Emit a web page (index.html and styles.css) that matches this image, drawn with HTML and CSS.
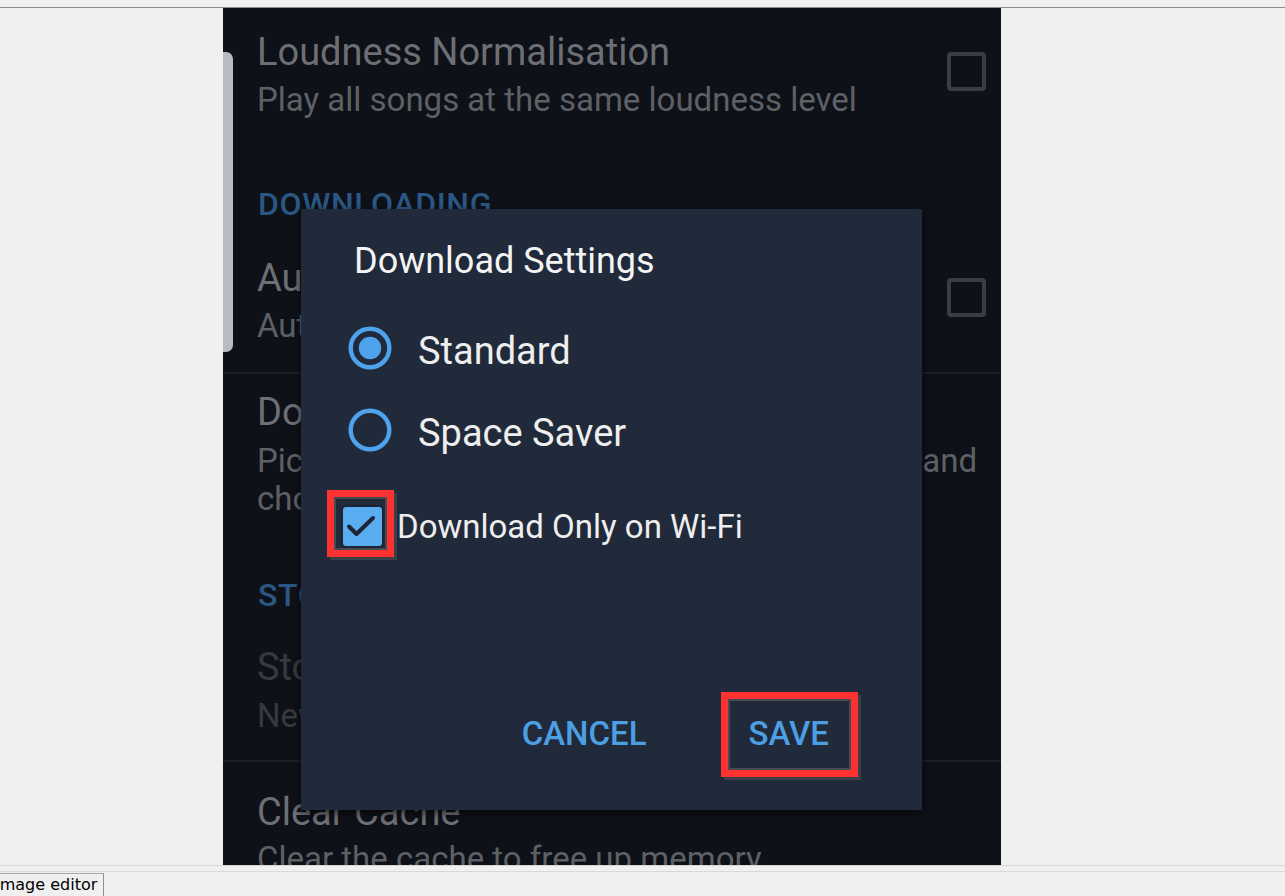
FILE: index.html
```html
<!DOCTYPE html>
<html lang="en">
<head>
<meta charset="utf-8">
<title>Download Settings</title>
<link rel="stylesheet" href="styles.css">
</head>
<body>
<div class="chrome-top"></div>
<div class="stage">
  <div class="phone">
    <div class="list">
      <div class="item item-loud">
        <div class="texts">
          <div class="title">Loudness Normalisation</div>
          <div class="sub">Play all songs at the same loudness level</div>
        </div>
        <span class="box"></span>
      </div>
      <div class="header header-dl">DOWNLOADING</div>
      <div class="item item-auto">
        <div class="texts">
          <div class="title">Auto Download</div>
          <div class="sub">Automatically download new songs</div>
        </div>
        <span class="box"></span>
      </div>
      <div class="divider divider-a"></div>
      <div class="item item-quality">
        <div class="texts">
          <div class="title">Download Settings</div>
          <div class="sub sub-wide">Pick the audio quality for your downloads, and choose whether to download on Wi-Fi only</div>
        </div>
      </div>
      <div class="header header-st">STORAGE</div>
      <div class="item item-storage">
        <div class="texts">
          <div class="title">Storage Location</div>
          <div class="sub">Never store music on SD card</div>
        </div>
      </div>
      <div class="divider divider-b"></div>
      <div class="item item-cache">
        <div class="texts">
          <div class="title">Clear Cache</div>
          <div class="sub">Clear the cache to free up memory</div>
        </div>
      </div>
    </div>

    <div class="scroll-thumb"></div>

    <div class="dialog">
      <div class="dialog-title">Download Settings</div>
      <div class="radio-row">
        <svg class="radio" width="44" height="44" viewBox="0 0 44 44"><circle cx="22" cy="22" r="19.3" fill="none" stroke="#4ea3ec" stroke-width="4.4"/><circle cx="22" cy="22" r="11.2" fill="#4ea3ec"/></svg>
        <span class="radio-label">Standard</span>
      </div>
      <div class="radio-row">
        <svg class="radio" width="44" height="44" viewBox="0 0 44 44"><circle cx="22" cy="22" r="19.3" fill="none" stroke="#4ea3ec" stroke-width="4.4"/></svg>
        <span class="radio-label">Space Saver</span>
      </div>
      <div class="check-row">
        <svg class="check" width="43" height="43" viewBox="0 0 43 43"><rect x="1" y="1" width="41" height="41" rx="4" fill="#58acef" stroke="#1c2536" stroke-width="2"/><path d="M8 21.5 L15.5 29 L32 13" fill="none" stroke="#1b2436" stroke-width="4" stroke-linecap="round" stroke-linejoin="round"/></svg>
        <span class="check-label">Download Only on Wi-Fi</span>
      </div>
      <div class="actions">
        <span class="btn">CANCEL</span>
        <span class="btn">SAVE</span>
      </div>
      <div class="mark mark-check"></div>
      <div class="mark mark-save"></div>
    </div>
  </div>
</div>
<div class="chrome-bottom">
  <div class="tab"><span class="tab-text">Image editor</span></div>
</div>
</body>
</html>
```

FILE: styles.css
```css
html, body {
  margin: 0;
  padding: 0;
  background: #f0f0f0;
  width: 1285px;
  height: 896px;
  overflow: hidden;
}

.chrome-top {
  height: 7px;
  background: #f0f0f0;
  border-bottom: 1px solid #8c8c8c;
}

.stage {
  height: 857px;
  padding-left: 223px;
  background: #f0f0f0;
  display: flex;
}

.phone {
  position: relative;
  width: 778px;
  height: 857px;
  background: #0e1118;
  overflow: hidden;
  font-family: Roboto, "Noto Sans", sans-serif;
}

.list {
  display: flex;
  flex-direction: column;
}

.item {
  display: flex;
  align-items: center;
  padding: 0 15px 0 34px;
}

.texts {
  flex: 1;
  min-width: 0;
}

.title {
  font-size: 38px;
  line-height: 44px;
  color: #6c6f74;
  white-space: nowrap;
}

.sub {
  font-size: 33px;
  line-height: 38px;
  color: #5d6065;
  margin-top: 7px;
  white-space: nowrap;
}

.sub-wide {
  white-space: normal;
  width: 720px;
  text-align: justify;
  margin-top: 8px;
}

.box {
  width: 31px;
  height: 31px;
  border: 4px solid #3a3d43;
  border-radius: 4px;
  margin-bottom: 7px;
  flex: none;
}

.item-loud { padding-top: 22px; }
.item-auto { padding-top: 33px; }
.item-quality { padding-top: 16px; }
.item-storage { padding-top: 31px; }
.item-storage .title,
.item-storage .sub { color: #36393e; }
.item-storage .sub { margin-top: 8px; }
.item-cache { padding-top: 28px; }
.item-cache .sub { margin-top: 6px; }

.header {
  font-size: 32px;
  line-height: 38px;
  font-weight: 500;
  color: #2a5784;
  padding-left: 35px;
  letter-spacing: 0.6px;
}
.header-dl { margin-top: 66px; }
.header-st { margin-top: 58px; }

.divider {
  height: 2px;
  background: #1c1f26;
}
.divider-a { margin-top: 27px; }
.divider-b { margin-top: 25px; }

.scroll-thumb {
  position: absolute;
  left: 0;
  top: 44px;
  width: 10px;
  height: 300px;
  background: #b9bcc0;
  border-radius: 0 7px 7px 0;
}

.dialog {
  position: absolute;
  left: 78px;
  top: 201px;
  width: 621px;
  height: 601px;
  background: #212a3a;
  box-shadow: 0 3px 8px rgba(0, 0, 0, 0.6);
  display: flex;
  flex-direction: column;
  box-sizing: border-box;
  padding-top: 31px;
}

.dialog-title {
  font-size: 36px;
  line-height: 42px;
  color: #f4f4f4;
  padding-left: 53px;
}

.radio-row {
  height: 82px;
  display: flex;
  align-items: center;
  padding-left: 47px;
}
.dialog-title + .radio-row { margin-top: 25px; }

.radio {
  flex: none;
  display: block;
}

.radio-label {
  font-size: 38px;
  line-height: 44px;
  color: #eeeeee;
  margin-left: 26px;
  margin-top: 5px;
}

.check-row {
  height: 60px;
  margin-top: 25px;
  display: flex;
  align-items: center;
  padding-left: 40px;
}

.check {
  flex: none;
  display: block;
}

.check-label {
  font-size: 33px;
  line-height: 40px;
  color: #eeeeee;
  margin-left: 13px;
  margin-top: 1px;
}

.actions {
  margin-top: auto;
  padding: 0 93px 57px 0;
  display: flex;
  justify-content: flex-end;
  gap: 102px;
}

.btn {
  font-size: 33px;
  line-height: 38px;
  font-weight: 500;
  color: #4c9fe2;
}

.mark {
  position: absolute;
  border: 7px solid #ff3232;
  box-sizing: border-box;
  box-shadow: 3px 3px 0 #3b3f47, inset 0 0 0 2px #454a53;
}
.mark-check {
  left: 26px;
  top: 281px;
  width: 67px;
  height: 67px;
}
.mark-save {
  left: 420px;
  top: 483px;
  width: 137px;
  height: 85px;
}

.chrome-bottom {
  height: 31px;
  box-sizing: border-box;
  border-top: 1px solid #d6d6d6;
  background: #f0f0f0;
  padding-top: 5px;
  display: flex;
  flex-direction: column;
}

.chrome-bottom::before {
  content: "";
  display: block;
  height: 1px;
  background: #d9d9d9;
}

.tab {
  width: 104px;
  height: 24px;
  box-sizing: border-box;
  border-top: 1px solid #a6a6a6;
  border-right: 1px solid #8f8f8f;
  margin-top: 1px;
  overflow: hidden;
  font-family: "DejaVu Sans", sans-serif;
  font-size: 16px;
  line-height: 22px;
  color: #000;
  white-space: nowrap;
}

.tab-text {
  display: inline-block;
  margin-left: -5px;
}
```
